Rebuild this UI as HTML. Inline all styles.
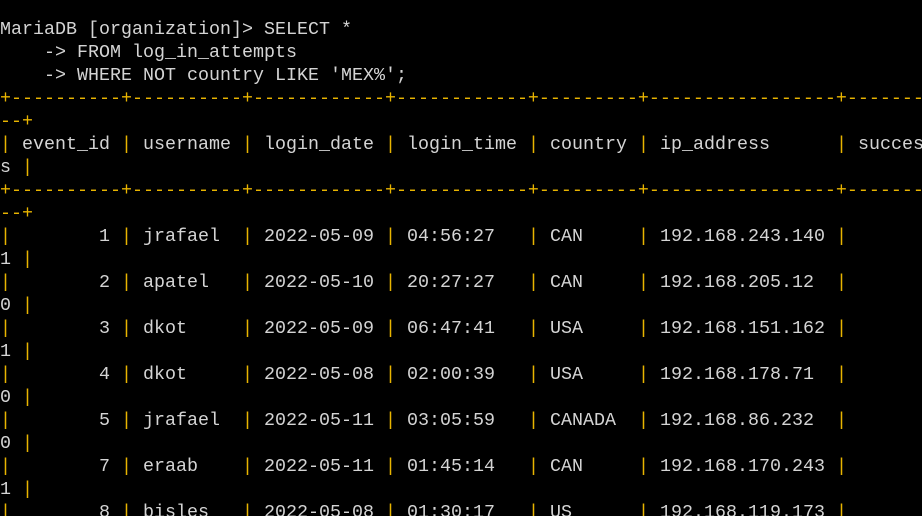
<!DOCTYPE html>
<html><head><meta charset="utf-8"><style>
html,body{margin:0;padding:0;background:#000;width:922px;height:516px;overflow:hidden;}
pre{margin:0;padding:18px 0 0 0;font-family:"Liberation Mono",monospace;font-size:18.33px;line-height:23px;color:#d4d4d4;white-space:pre;height:498px;overflow:hidden;}
.y{color:#e8b400;}
</style></head><body><pre>MariaDB [organization]&gt; SELECT *
    -&gt; FROM log_in_attempts
    -&gt; WHERE NOT country LIKE 'MEX%';
<span class="y">+----------+----------+------------+------------+---------+-----------------+-------</span>
<span class="y">--+</span>
<span class="y">|</span> event_id <span class="y">|</span> username <span class="y">|</span> login_date <span class="y">|</span> login_time <span class="y">|</span> country <span class="y">|</span> ip_address      <span class="y">|</span> succes
s <span class="y">|</span>
<span class="y">+----------+----------+------------+------------+---------+-----------------+-------</span>
<span class="y">--+</span>
<span class="y">|</span>        1 <span class="y">|</span> jrafael  <span class="y">|</span> 2022-05-09 <span class="y">|</span> 04:56:27   <span class="y">|</span> CAN     <span class="y">|</span> 192.168.243.140 <span class="y">|</span>       
1 <span class="y">|</span>
<span class="y">|</span>        2 <span class="y">|</span> apatel   <span class="y">|</span> 2022-05-10 <span class="y">|</span> 20:27:27   <span class="y">|</span> CAN     <span class="y">|</span> 192.168.205.12  <span class="y">|</span>       
0 <span class="y">|</span>
<span class="y">|</span>        3 <span class="y">|</span> dkot     <span class="y">|</span> 2022-05-09 <span class="y">|</span> 06:47:41   <span class="y">|</span> USA     <span class="y">|</span> 192.168.151.162 <span class="y">|</span>       
1 <span class="y">|</span>
<span class="y">|</span>        4 <span class="y">|</span> dkot     <span class="y">|</span> 2022-05-08 <span class="y">|</span> 02:00:39   <span class="y">|</span> USA     <span class="y">|</span> 192.168.178.71  <span class="y">|</span>       
0 <span class="y">|</span>
<span class="y">|</span>        5 <span class="y">|</span> jrafael  <span class="y">|</span> 2022-05-11 <span class="y">|</span> 03:05:59   <span class="y">|</span> CANADA  <span class="y">|</span> 192.168.86.232  <span class="y">|</span>       
0 <span class="y">|</span>
<span class="y">|</span>        7 <span class="y">|</span> eraab    <span class="y">|</span> 2022-05-11 <span class="y">|</span> 01:45:14   <span class="y">|</span> CAN     <span class="y">|</span> 192.168.170.243 <span class="y">|</span>       
1 <span class="y">|</span>
<span class="y">|</span>        8 <span class="y">|</span> bisles   <span class="y">|</span> 2022-05-08 <span class="y">|</span> 01:30:17   <span class="y">|</span> US      <span class="y">|</span> 192.168.119.173 <span class="y">|</span>       
</pre></body></html>
